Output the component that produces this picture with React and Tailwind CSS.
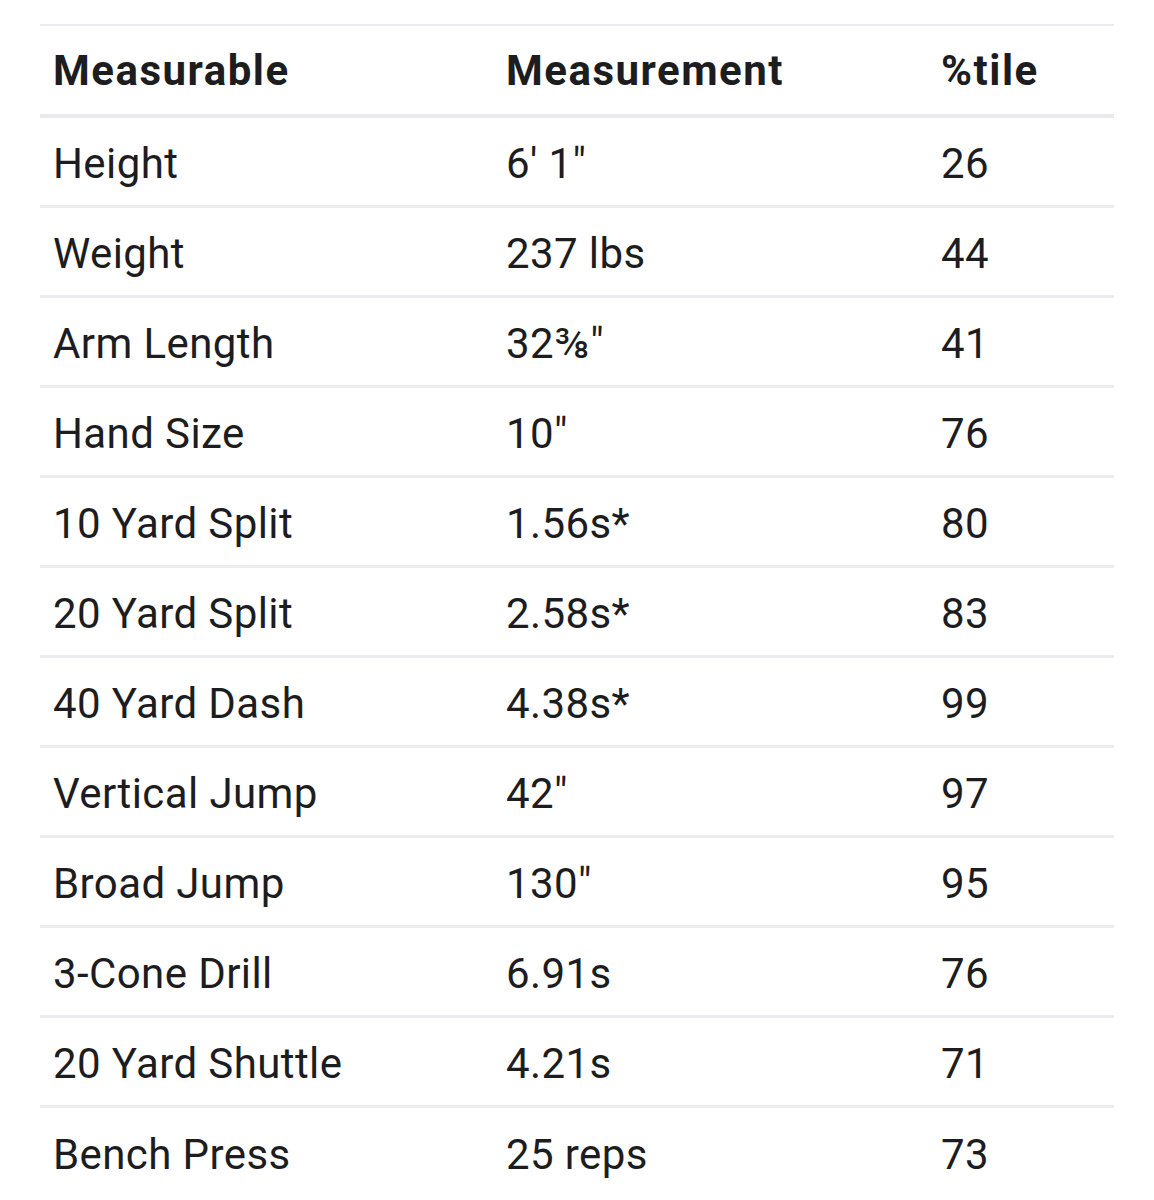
import React from 'react';

const rows = [
    ['Height', '6\' 1"', '26'],
    ['Weight', '237 lbs', '44'],
    ['Arm Length', '32⅜"', '41'],
    ['Hand Size', '10"', '76'],
    ['10 Yard Split', '1.56s*', '80'],
    ['20 Yard Split', '2.58s*', '83'],
    ['40 Yard Dash', '4.38s*', '99'],
    ['Vertical Jump', '42"', '97'],
    ['Broad Jump', '130"', '95'],
    ['3-Cone Drill', '6.91s', '76'],
    ['20 Yard Shuttle', '4.21s', '71'],
    ['Bench Press', '25 reps', '73'],
];

const cols = 'grid grid-cols-[453px_435px_1fr]';

export default function App() {
    return (
        <div className="min-h-[1200px] bg-white pt-[24px] px-[40px] text-[#1d1d1f]" style={{ fontFamily: 'Roboto, "Liberation Sans", sans-serif' }}>
            <div className="border-t-2 border-[#ececf0]">
                {/* header */}
                <div className={`${cols} h-[92px] items-center border-b-4 border-[#e9e9ee] text-[42px] font-bold tracking-[1.5px]`}>
                    <div className="pl-[13px]">Measurable</div>
                    <div className="pl-[13px]">Measurement</div>
                    <div className="pl-[13px]">%tile</div>
                </div>

                {rows.map(([name, value, pct], i) => (
                    <div
                        key={name}
                        className={`${cols} h-[90px] items-center text-[42px] tracking-[0.4px] ${i < rows.length - 1 ? 'border-b-[3px] border-[#ececf0]' : ''}`}
                    >
                        <div className="pl-[13px] pt-[3px]">{name}</div>
                        <div className="pl-[13px] pt-[3px]">{value}</div>
                        <div className="pl-[13px] pt-[3px]">{pct}</div>
                    </div>
                ))}
            </div>
        </div>
    );
}
